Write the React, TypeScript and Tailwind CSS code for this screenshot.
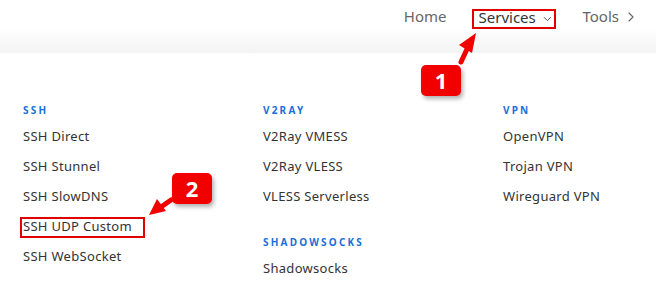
import { ChevronDown, ChevronRight } from 'lucide-react';

const columns = [
  [
    { title: 'SSH', items: ['SSH Direct', 'SSH Stunnel', 'SSH SlowDNS', 'SSH UDP Custom', 'SSH WebSocket'] },
  ],
  [
    { title: 'V2RAY', items: ['V2Ray VMESS', 'V2Ray VLESS', 'VLESS Serverless'] },
    { title: 'SHADOWSOCKS', items: ['Shadowsocks'] },
  ],
  [{ title: 'VPN', items: ['OpenVPN', 'Trojan VPN', 'Wireguard VPN'] }],
];

function Badge({ n, className }: { n: string; className: string }) {
  return (
    <div
      className={`absolute flex h-[31px] w-[40px] items-center justify-center rounded-[5px] bg-[#f20000] text-[22px] font-bold text-white shadow-[2px_3px_4px_rgba(0,0,0,0.3)] ${className}`}
    >
      {n}
    </div>
  );
}

export default function App() {
  return (
    <div className="relative h-[288px] w-[656px] overflow-hidden bg-white font-['Noto_Sans',sans-serif]">
      {/* Top nav */}
      <header className="h-[53px] bg-[linear-gradient(to_bottom,#ffffff_0px,#ffffff_28px,#f3f3f3_53px)]">
        <nav className="flex items-start justify-end pr-[17px] pt-[9px] text-[15px] text-[#666]">
          <span className="mr-[25px] flex h-[20px] items-center pb-[5px]">Home</span>
          <span className="mr-[27px] flex h-[20px] w-[84px] items-center gap-[5px] border-2 border-[#e00000] pb-[3px] pl-[5px] text-[#333]">
            Services
            <ChevronDown className="mt-[2px] h-4 w-4" strokeWidth={1.6} />
          </span>
          <span className="flex h-[20px] items-center gap-[4px] pb-[5px]">
            Tools
            <ChevronRight className="mt-[1px] h-4 w-4" strokeWidth={1.6} />
          </span>
        </nav>
      </header>

      {/* Dropdown panel */}
      <div className="grid grid-cols-[240px_240px_1fr] pl-[23px] pt-[51px]">
        {columns.map((col, i) => (
          <div key={i} className="flex flex-col">
            {col.map((group, gi) => (
              <div key={group.title} className={gi > 0 ? 'mt-[30px]' : ''}>
                <div className="text-[10px] font-bold leading-[12px] tracking-[2.2px] text-[#1a6fd8]">
                  {group.title}
                </div>
                <ul className="mt-[12px] flex flex-col gap-[12px] text-[13px] tracking-[0.3px] text-[#333]">
                  {group.items.map((item) => (
                    <li key={item} className="flex h-[18px] items-center">
                      {item === 'SSH UDP Custom' ? (
                        <span className="-ml-[3px] inline-flex h-[21px] items-center border-2 border-[#e00000] pl-[1px] pr-[11px]">
                          {item}
                        </span>
                      ) : (
                        item
                      )}
                    </li>
                  ))}
                </ul>
              </div>
            ))}
          </div>
        ))}
      </div>

      {/* Annotations */}
      <svg className="absolute left-0 top-0" width="656" height="288">
        <path d="M461 62 L468 47" stroke="#f20000" strokeWidth="5" strokeLinecap="round" />
        <polygon points="476,33 472,53 459,45" fill="#f20000" />
        <path d="M171 200 L161 207" stroke="#f20000" strokeWidth="5" strokeLinecap="round" />
        <polygon points="149,215 157,199 166,211" fill="#f20000" />
      </svg>
      <Badge n="1" className="left-[421px] top-[65px]" />
      <Badge n="2" className="left-[172px] top-[173px]" />
    </div>
  );
}
